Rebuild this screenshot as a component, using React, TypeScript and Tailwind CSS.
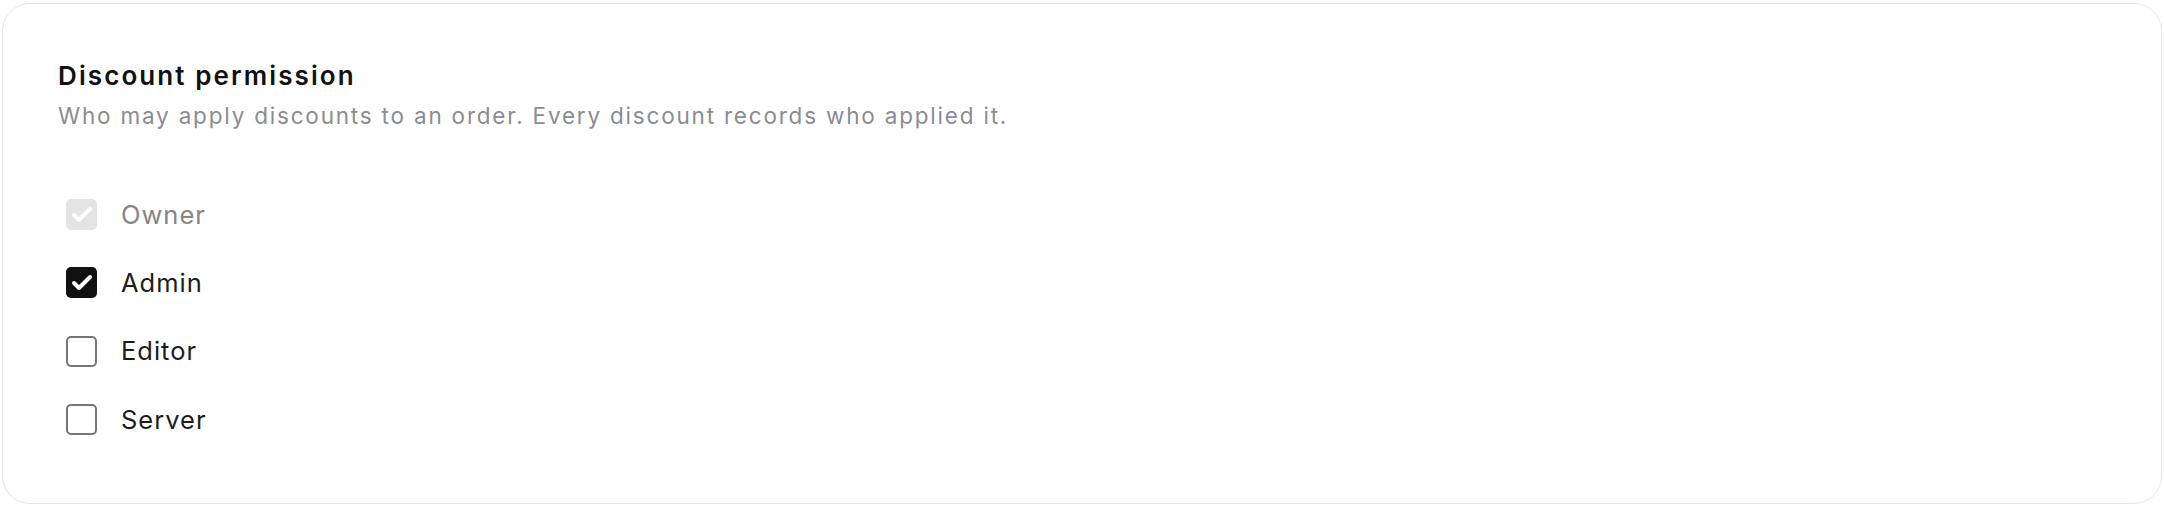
import { Check } from "lucide-react";

type Role = {
  name: string;
  checked: boolean;
  locked?: boolean;
};

const ROLES: Role[] = [
  { name: "Owner", checked: true, locked: true },
  { name: "Admin", checked: true },
  { name: "Editor", checked: false },
  { name: "Server", checked: false },
];

function RoleBox({ role }: { role: Role }) {
  if (role.locked) {
    return (
      <span className="flex items-center justify-center w-[31px] h-[31px] rounded-[5px] bg-[#e4e4e4]">
        <Check className="w-[24px] h-[24px] text-white" strokeWidth={4} />
      </span>
    );
  }
  if (role.checked) {
    return (
      <span className="flex items-center justify-center w-[31px] h-[31px] rounded-[5px] bg-[#111111]">
        <Check className="w-[24px] h-[24px] text-white" strokeWidth={4} />
      </span>
    );
  }
  return <span className="block w-[31px] h-[31px] rounded-[5px] border-2 border-[#767676] bg-white" />;
}

export default function App() {
  return (
    <div className="w-[2164px] h-[506px] bg-white pt-[3px] px-[2px] font-['Inter',sans-serif]">
      <div className="h-[501px] rounded-[28px] border border-[#e6e6e6] bg-white pl-[55px] pt-[57px]">
        {/* Heading */}
        <h2 className="text-[26px] leading-[30px] font-semibold tracking-[2.1px] text-[#111111]">
          Discount permission
        </h2>
        <p className="mt-[10px] text-[22.5px] leading-[30px] tracking-[1.8px] text-[#8b8b93]">
          Who may apply discounts to an order. Every discount records who applied it.
        </p>

        {/* Role checkboxes */}
        <div className="mt-[49.5px] flex flex-col">
          {ROLES.map((role) => (
            <label key={role.name} className="flex items-center h-[68.3px] pl-[8px] gap-[24px]">
              <RoleBox role={role} />
              <span
                className={`text-[25.5px] leading-[30px] tracking-[1px] ${
                  role.locked ? "text-[#848484]" : "text-[#1c1c1c]"
                }`}
              >
                {role.name}
              </span>
            </label>
          ))}
        </div>
      </div>
    </div>
  );
}
